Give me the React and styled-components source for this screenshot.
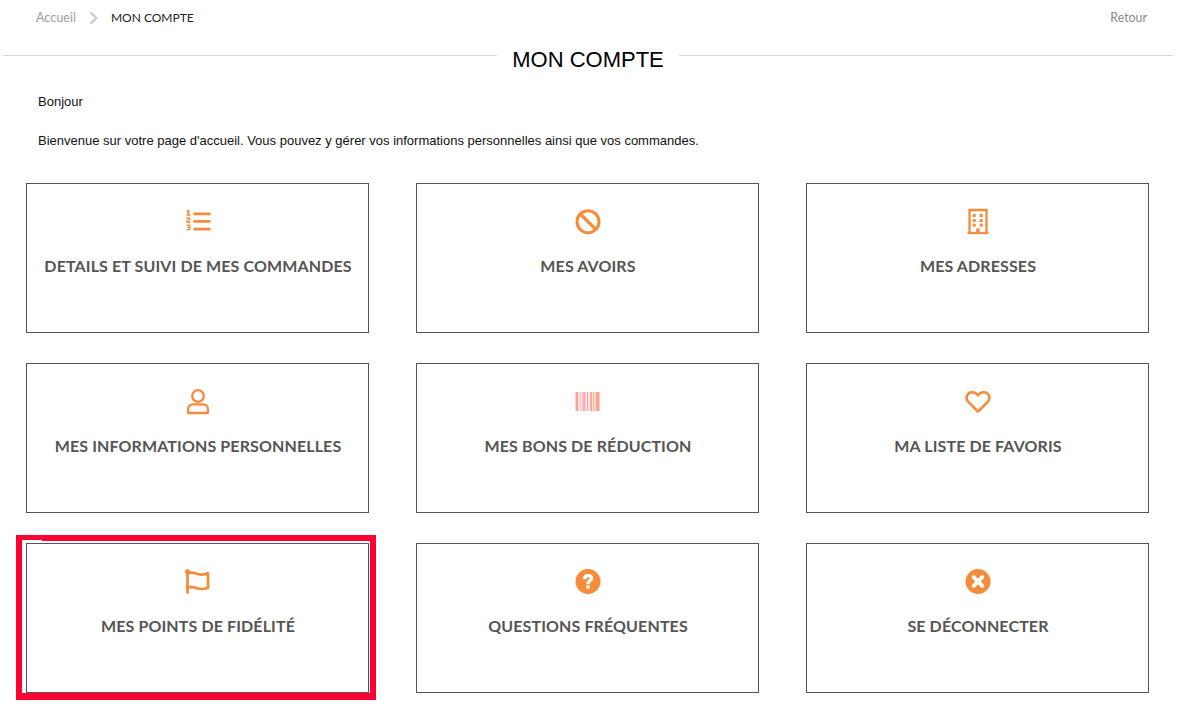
import React from "react";
import styled, { createGlobalStyle } from "styled-components";

const Global = createGlobalStyle`
  html, body { margin: 0; padding: 0; background: #fff; }
  body { font-family: "Liberation Sans", Arial, sans-serif; overflow: hidden; }
`;

const Page = styled.div`
  width: 1192px;
  height: 718px;
  overflow: hidden;
  position: relative;
`;

const TopBar = styled.div`
  display: flex;
  justify-content: space-between;
  align-items: center;
  height: 35px;
  margin-bottom: 1px;
  padding: 0 45px 0 36px;
  font-family: Lato, sans-serif;
  font-size: 12px;
`;

const Crumbs = styled.div`
  display: flex;
  align-items: center;
`;

const Crumb = styled.span`
  color: ${p => (p.$current ? "#222" : "#a0a0a0")};
  font-size: ${p => (p.$current ? "12px" : "12.6px")};
`;

const Sep = styled.svg`
  width: 10px;
  height: 14px;
  margin: 0 13px 0 12px;
`;

const BackLink = styled.span`
  color: #888;
  font-size: 12.4px;
`;

const TitleRow = styled.div`
  display: flex;
  align-items: center;
  gap: 15px;
  height: 48px;
  padding: 0 19px 0 3px;
  margin-bottom: 1px;
`;

const Rule = styled.div`
  flex: 1;
  height: 1px;
  background: #d8d8d8;
  position: relative;
  top: -5px;
`;

const Title = styled.h1`
  margin: 0;
  font-size: 22px;
  line-height: 48px;
  font-weight: 400;
  color: #000;
  white-space: nowrap;
`;

const Intro = styled.div`
  padding: 9px 0 0 38px;
  color: #111;
`;

const Para = styled.p`
  margin: 0 0 ${p => p.$gap}px;
  line-height: 16px;
  font-size: 13px;
`;

const Grid = styled.div`
  display: grid;
  grid-template-columns: repeat(3, 343px);
  grid-auto-rows: 150px;
  column-gap: 47px;
  row-gap: 30px;
  padding-left: 26px;
  margin-top: 34px;
`;

const Card = styled.a`
  position: relative;
  box-sizing: border-box;
  display: flex;
  flex-direction: column;
  align-items: center;
  border: 1px solid #555;
  padding-top: 24px;
  color: #555;
`;

const IconBox = styled.div`
  width: 28px;
  height: 28px;
  display: flex;
  align-items: center;
  justify-content: center;
  color: #f68b3c;
`;

const Label = styled.div`
  margin: 20px 0 0 1px;
  font-family: Lato, sans-serif;
  font-weight: 700;
  font-size: 16px;
  letter-spacing: 0.12px;
  line-height: 20px;
  color: #555;
  white-space: nowrap;
`;

const Highlight = styled.div`
  position: absolute;
  left: -11px;
  top: -9px;
  width: 360px;
  height: 165px;
  box-sizing: border-box;
  border: 6px solid #ff0033;
  border-bottom-width: 7px;
  pointer-events: none;

  &::before {
    content: "";
    position: absolute;
    left: 0;
    top: -1px;
    width: 20px;
    height: 1px;
    background: #fff;
  }
`;

const Ico = ({ children }) => (
  <svg width="28" height="28" viewBox="0 0 28 28" fill="none" stroke="currentColor" strokeWidth="2.2" strokeLinecap="round" strokeLinejoin="round">
    {children}
  </svg>
);

const ListIcon = () => (
  <Ico>
    <g stroke="none" fill="currentColor">
      <rect x="9.5" y="4.5" width="17" height="2.8" />
      <rect x="9.5" y="12" width="17" height="2.8" />
      <rect x="9.5" y="19.7" width="17" height="2.8" />
      <rect x="3.4" y="2" width="2" height="5.4" />
      <rect x="2.4" y="2.4" width="1.4" height="1.4" />
      <rect x="2.400" y="6.6" width="4" height="1.2" />
      <path d="M2.400 9.300h4v3.300H4.200v1h2.200v1.400h-4v-3.300h2.400v-1H2.400z" />
      <path d="M2.400 16.400h4v5.800h-4v-1.300h2.400v-1h-1.600v-1.100h1.600v-1.100H2.400z" />
    </g>
  </Ico>
);

const BanIcon = () => (
  <Ico>
    <circle cx="14" cy="13.7" r="11" strokeWidth="3" />
    <path d="M6.300 6l15.400 15.400" strokeWidth="3.200" strokeLinecap="butt" />
  </Ico>
);

const BuildingIcon = () => (
  <Ico>
    <path d="M5.500 25V2h17v23" strokeWidth="2.300" strokeLinecap="butt" strokeLinejoin="miter" />
    <path d="M3.500 25h21" strokeWidth="2.300" strokeLinecap="butt" />
    <g stroke="none" fill="currentColor">
      <rect x="8.700" y="6" width="3" height="3" />
      <rect x="15.700" y="6" width="3" height="3" />
      <rect x="8.700" y="11" width="3" height="3" />
      <rect x="15.700" y="11" width="3" height="3" />
      <rect x="8.700" y="15.700" width="3" height="3" />
      <rect x="15.700" y="15.700" width="3" height="3" />
      <rect x="12.200" y="20.500" width="3.400" height="4.500" />
    </g>
  </Ico>
);

const UserIcon = () => (
  <Ico>
    <circle cx="14" cy="8" r="5.800" strokeWidth="2.300" />
    <path d="M9 16.300h10c3.200 0 4.900 2.400 4.900 5v3.700H4.100v-3.700c0-2.600 1.700-5 4.900-5z" strokeWidth="2.300" />
  </Ico>
);

const BarcodeIcon = () => {
  const bars = [
    [1.500, 2.700, "#f9a58a"], [5, 2.300, "#fcd0d8"], [7.300, 1.700, "#f0c8f0"], [9, 2.700, "#f8b0a8"],
    [12.800, 1.300, "#f9a58a"], [14.800, 0.800, "#f0c8f0"], [16.200, 2, "#f9a890"], [18.800, 1.700, "#fcc080"],
    [20.800, 1.300, "#fcd8d0"], [22.100, 3.400, "#f8a090"]
  ];
  return (
    <svg width="28" height="28" viewBox="0 0 28 28">
      {bars.map(([x, w, c], i) => <rect key={i} x={x} y="4" width={w} height="19" fill={c} />)}
    </svg>
  );
};

const HeartIcon = () => (
  <Ico>
    <path d="M14 23.500L4.300 13.800C.8 10 3 4.500 8 4.200c2.600-.2 4.700 1.100 6 3.200 1.300-2.100 3.400-3.400 6-3.200 5 .3 7.200 5.800 3.700 9.600z" strokeWidth="2.500" />
  </Ico>
);

const FlagIcon = () => (
  <Ico>
    <circle cx="3.300" cy="3.500" r="2.400" fill="currentColor" stroke="none" />
    <path d="M3.500 4v20.500" strokeWidth="2.800" />
    <path d="M4 5c3.500-1 6.500-.2 9 .8 3.500 1.300 7 1.100 11-.5v14.700c-4 1.200-7.500 1.500-11 .2-2.500-1-5.500-1.700-9-.7" strokeWidth="2.700" />
  </Ico>
);

const HelpIcon = () => (
  <svg width="28" height="28" viewBox="0 0 28 28">
    <circle cx="14" cy="13.500" r="12.500" fill="currentColor" />
    <path d="M9.500 10.500c.3-2.700 2.100-4 4.600-4 2.700 0 4.500 1.600 4.500 3.800 0 3-3.500 3.100-3.500 5.500h-2.200c-.1-3.300 3.200-3.700 3.200-5.400 0-1-.8-1.700-2-1.700-1.100 0-1.900.7-2.100 1.900z" fill="#fff" stroke="#fff" strokeWidth="1.100" />
    <rect x="12.500" y="17.500" width="3.200" height="3.200" fill="#fff" />
  </svg>
);

const CloseIcon = () => (
  <svg width="28" height="28" viewBox="0 0 28 28">
    <circle cx="14" cy="13.500" r="12.500" fill="currentColor" />
    <path d="M9.700 9.200l8.600 8.600M18.300 9.200l-8.600 8.600" stroke="#fff" strokeWidth="4" strokeLinecap="round" />
  </svg>
);

const items = [
  ["DETAILS ET SUIVI DE MES COMMANDES", ListIcon],
  ["MES AVOIRS", BanIcon],
  ["MES ADRESSES", BuildingIcon],
  ["MES INFORMATIONS PERSONNELLES", UserIcon],
  ["MES BONS DE RÉDUCTION", BarcodeIcon],
  ["MA LISTE DE FAVORIS", HeartIcon],
  ["MES POINTS DE FIDÉLITÉ", FlagIcon, true],
  ["QUESTIONS FRÉQUENTES", HelpIcon],
  ["SE DÉCONNECTER", CloseIcon],
];

export default function App() {
  return (
    <Page>
      <Global />
      <TopBar>
        <Crumbs>
          <Crumb>Accueil</Crumb>
          <Sep viewBox="0 0 10 14" fill="none" stroke="#c8c8c8" strokeWidth="2.200">
            <path d="M2.500 1.500L8.500 7l-6 5.500" />
          </Sep>
          <Crumb $current>MON COMPTE</Crumb>
        </Crumbs>
        <BackLink>Retour</BackLink>
      </TopBar>
      <TitleRow>
        <Rule />
        <Title>MON COMPTE</Title>
        <Rule />
      </TitleRow>
      <Intro>
        <Para $gap={23}>Bonjour</Para>
        <Para $gap={0}>Bienvenue sur votre page d'accueil. Vous pouvez y gérer vos informations personnelles ainsi que vos commandes.</Para>
      </Intro>
      <Grid>
        {items.map(([label, Icon, hl]) => (
          <Card key={label}>
            <IconBox><Icon /></IconBox>
            <Label>{label}</Label>
            {hl && <Highlight />}
          </Card>
        ))}
      </Grid>
    </Page>
  );
}
